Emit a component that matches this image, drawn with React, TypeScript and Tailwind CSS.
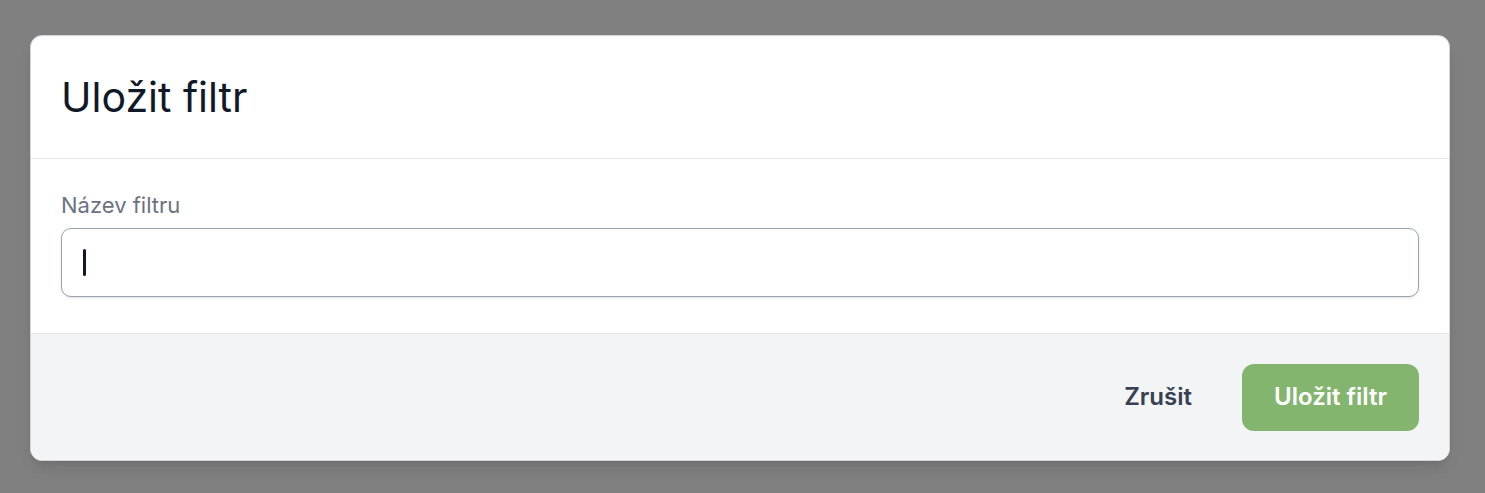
export default function App() {
  return (
    <div className="min-h-screen bg-[#808080] px-[30px] pt-[35px] font-['Inter',sans-serif]">
      <div className="w-[1420px] overflow-hidden rounded-xl border border-[#d1d5db] bg-white shadow-lg">
        {/* Header */}
        <div className="flex h-[123px] items-center border-b border-[#e5e7eb] px-[30px]">
          <h2 className="text-[41px] font-normal leading-none text-[#111827]">Uložit filtr</h2>
        </div>

        {/* Body */}
        <div className="px-[30px] pb-[36px] pt-[31px]">
          <label className="block text-[22px] leading-[30px] text-[#6b7280]">Název filtru</label>
          <div className="mt-[8px] flex h-[69px] items-center rounded-[10px] border border-[#9ca3af] bg-white px-[21px] shadow-sm">
            <span className="h-[27px] w-[3px] rounded-full bg-[#111827]" />
          </div>
        </div>

        {/* Footer */}
        <div className="flex h-[127px] items-center justify-end gap-[30px] border-t border-[#e5e7eb] bg-[#f3f4f6] px-[30px]">
          <button className="px-[20px] text-[24px] font-semibold text-[#374151]">Zrušit</button>
          <button className="h-[67px] w-[177px] rounded-[12px] bg-[#84b56f] text-[24px] font-semibold text-white">
            Uložit filtr
          </button>
        </div>
      </div>
    </div>
  );
}
